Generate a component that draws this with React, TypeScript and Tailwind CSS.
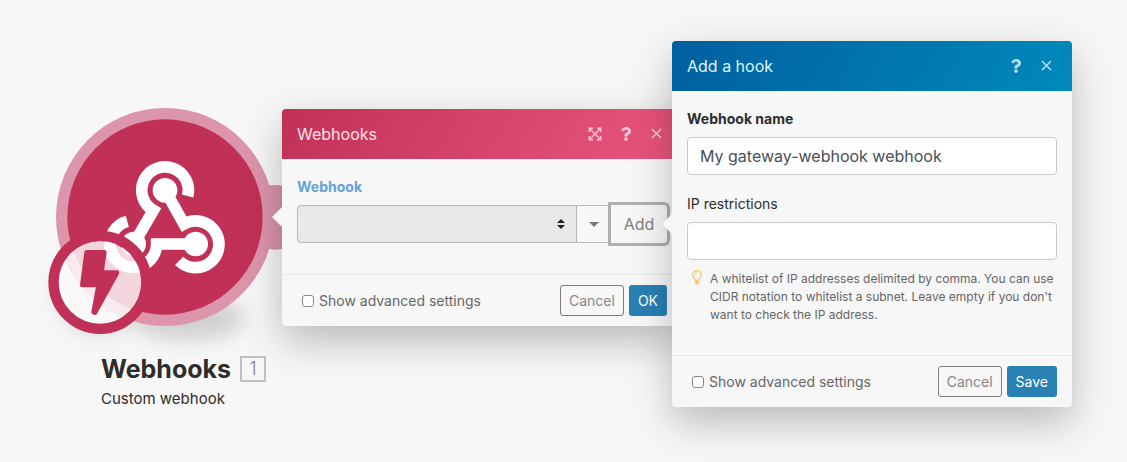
import { useState, type ReactNode } from 'react';
import { FaQuestion } from 'react-icons/fa';

const FONT = "font-['Inter','Liberation_Sans',sans-serif]";

function ExpandIcon() {
  return (
    <svg className="w-[14px] h-[14px]" viewBox="0 0 14 14" fill="none" stroke="currentColor" strokeWidth={1.6} aria-hidden="true">
      <path d="M1.300 5V1.300H5M9 1.300h3.700V5M12.700 9v3.700H9M5 12.700H1.300V9" />
      <path d="M1.500 1.500l11 11M12.500 1.500l-11 11" strokeWidth={1.400} />
    </svg>
  );
}

function CloseIcon() {
  return (
    <svg className="w-[11px] h-[11px]" viewBox="0 0 11 11" fill="none" stroke="currentColor" strokeWidth={1.5} aria-hidden="true">
      <path d="M1 1l9 9M10 1l-9 9" />
    </svg>
  );
}

function BulbIcon() {
  return (
    <svg className="w-[10px] h-[15px] shrink-0" viewBox="0 0 10 15" fill="none" stroke="#fbc15e" aria-hidden="true">
      <path strokeWidth={1.2} d="M3 10.2C3 8.4.7 7.400.7 4.900a4.300 4.300 0 0 1 8.600 0C9.300 7.400 7 8.400 7 10.200z" />
      <path strokeWidth={0.9} d="M5 2.700a2 2 0 0 0-2 2" />
      <path strokeWidth={1.500} d="M2.900 11.700h4.200M3.300 13.500h3.400" />
    </svg>
  );
}

function ModuleIcon() {
  return (
    <svg className="block w-[250px] h-[250px] overflow-visible" viewBox="0 0 750 750" aria-hidden="true">
      <defs>
        <filter id="soft" x="-50%" y="-50%" width="200%" height="200%">
          <feGaussianBlur stdDeviation="32" />
        </filter>
      </defs>
      <ellipse cx="445" cy="670" rx="170" ry="65" fill="#000" opacity="0.16" filter="url(#soft)" />
      <circle cx="180" cy="590" r="130" fill="#000" opacity="0.12" filter="url(#soft)" />
      <circle cx="705" cy="367" r="97" fill="#d893a8" />
      <circle cx="375" cy="366" r="327" fill="#dc95aa" />
      <circle cx="375" cy="366" r="293" fill="#c13157" />

      {/* webhook mark */}
      <g fill="none" stroke="#fff" strokeWidth={35}>
        <path d="M281 447L340 346A70 70 0 1 1 443 303" />
        <path d="M375 285L432 387A70 70 0 1 1 417.500 497.500" />
        <path d="M467 447H350A70 70 0 1 1 262 379" />
      </g>
      <g fill="#fff">
        <circle cx="375" cy="286" r="37" />
        <circle cx="467" cy="447" r="37" />
        <circle cx="281" cy="447" r="37" />
      </g>

      {/* instant trigger badge */}
      <circle cx="180" cy="562" r="124" fill="#fff" opacity="0.8" />
      <circle cx="180" cy="562" r="139.500" fill="none" stroke="#c13157" strokeWidth={31} />
      <path
        d="M140 472H193L184 533H231L165 653L161 651L176 570H127z"
        fill="#c13157" stroke="#c13157" strokeWidth={14} strokeLinejoin="round"
      />
    </svg>
  );
}

interface PanelProps {
  title: string;
  headerClass: string;
  pointerClass: string;
  className: string;
  expandable?: boolean;
  confirmLabel: string;
  checkboxId: string;
  children: ReactNode;
}

function Panel({ title, headerClass, pointerClass, className, expandable, confirmLabel, checkboxId, children }: PanelProps) {
  const [advanced, setAdvanced] = useState(false);

  return (
    <section className={`relative flex-1 min-w-0 rounded bg-[#f7f7f7] shadow-[0_15px_40px_rgba(0,0,0,0.25)] ${className}`}>
      {/* Pointer */}
      <span className={`absolute -left-[10px] w-0 h-0 border-y-[10px] border-y-transparent border-r-[10px] border-r-[#f7f7f7] ${pointerClass}`} />

      {/* Header */}
      <header className={`flex items-center justify-between h-[50px] pl-[15px] pr-[10px] pb-px rounded-t ${headerClass}`}>
        <h2 className="text-base">{title}</h2>
        <div className="flex items-center opacity-80">
          {expandable && (
            <button type="button" aria-label="Expand" className="flex items-center justify-center w-[31px] h-8">
              <ExpandIcon />
            </button>
          )}
          <button type="button" aria-label="Help" className="flex items-center justify-center w-[31px] h-8">
            <FaQuestion size={14} />
          </button>
          <button type="button" aria-label="Close" className="flex items-center justify-center w-[31px] h-8">
            <CloseIcon />
          </button>
        </div>
      </header>

      <div className="px-[15px] pt-[18px] pb-[31px]">{children}</div>

      {/* Footer */}
      <footer className="flex items-center justify-between px-[15px] py-[10px] border-t border-[#e8e8e8] text-sm">
        <label htmlFor={checkboxId} className="flex items-center gap-[5px] pl-[5px] text-[#666]">
          <input
            id={checkboxId}
            type="checkbox"
            checked={advanced}
            onChange={(e) => setAdvanced(e.target.checked)}
            className="w-3 h-3 appearance-none rounded-[3px] border border-[#888] bg-white checked:bg-[#2980b3]"
          />
          Show advanced settings
        </label>
        <div className="flex gap-[5px]">
          <button type="button" className="h-[31px] px-2 rounded-[3px] border border-[#7d7d7d] text-[#868686]">Cancel</button>
          <button type="button" className="h-[31px] px-[9px] rounded-[3px] bg-[#2980b3] text-white">{confirmLabel}</button>
        </div>
      </footer>
    </section>
  );
}

export default function App() {
  const [hook, setHook] = useState('');
  const [name, setName] = useState('My gateway-webhook webhook');
  const [ips, setIps] = useState('');

  return (
    <main className={`flex items-start min-h-screen bg-[#f7f7f7] overflow-hidden pr-[55px] ${FONT}`}>
      {/* Module */}
      <div className="w-[282px] shrink-0 pt-[95px] text-[#2d2d2d]">
        <div className="pl-10">
          <ModuleIcon />
        </div>
        <div className="relative pl-[101px] pt-2">
          <div className="flex items-center gap-[9px]">
            <h1 className="text-[25px] leading-8 font-bold">Webhooks</h1>
            <span className="flex items-center justify-center w-[26px] h-[26px] border-2 border-[#c0c0c0] text-lg font-light text-[#808080]">1</span>
          </div>
          <p className="mt-1 text-[15px] leading-5">Custom webhook</p>
        </div>
      </div>

      <Panel
        title="Webhooks"
        headerClass="bg-linear-120 from-[#c13157] to-[#ea557f] text-[#fde3ea]"
        pointerClass="top-[98px]"
        className="mt-[109px]"
        expandable
        confirmLabel="OK"
        checkboxId="webhook-advanced"
      >
        <label htmlFor="webhook" className="block mb-2 text-sm leading-5 font-bold text-[#62a3dc]">Webhook</label>
        <div className="flex h-[38px]">
          <div className="relative flex-1">
            <select
              id="webhook"
              value={hook}
              onChange={(e) => setHook(e.target.value)}
              className="w-full h-full appearance-none rounded-l border border-[#b9b9b9] bg-[#e9e9e9] px-3"
            >
              <option value=""></option>
            </select>
            <svg className="absolute right-3 top-[14px] w-2 h-[10px] pointer-events-none" viewBox="0 0 8 10" fill="#222" aria-hidden="true">
              <path d="M4 0l4 4H0zM4 10L0 6h8z" />
            </svg>
          </div>
          <button type="button" aria-label="More options" className="flex items-center justify-center w-[34px] border-y border-[#b9b9b9]">
            <svg className="w-[10px] h-[5px]" viewBox="0 0 10 5" fill="#777" aria-hidden="true">
              <path d="M0 0h10L5 5z" />
            </svg>
          </button>
          <button type="button" className="w-14 rounded-r-[3px] text-[#808080] bg-[#f7f7f7] shadow-[0_0_0_3px_#afafaf]">Add</button>
        </div>
      </Panel>

      <Panel
        title="Add a hook"
        headerClass="bg-linear-120 from-[#005f9f] to-[#008abb] text-[#dff6ff]"
        pointerClass="top-[173px]"
        className="mt-[41px] -ml-[10px] z-10"
        confirmLabel="Save"
        checkboxId="hook-advanced"
      >
        <label htmlFor="hook-name" className="block mb-2 text-sm leading-5 font-bold text-[#2d2d2d]">Webhook name</label>
        <input
          id="hook-name"
          type="text"
          value={name}
          onChange={(e) => setName(e.target.value)}
          className="block w-full h-[38px] px-3 rounded border border-[#ccc] bg-white text-base text-[#495057]"
        />
        <label htmlFor="ip-restrictions" className="block mt-[19px] mb-2 text-sm leading-5 text-[#2d2d2d]">IP restrictions</label>
        <input
          id="ip-restrictions"
          type="text"
          value={ips}
          onChange={(e) => setIps(e.target.value)}
          className="block w-full h-[38px] px-3 rounded border border-[#ccc] bg-white text-base text-[#495057]"
        />
        <div className="flex items-start gap-2 mt-[10px] pl-[5px]">
          <BulbIcon />
          <p className="text-xs leading-[18px] text-[#666]">
            A whitelist of IP addresses delimited by comma. You can use CIDR notation to whitelist a subnet. Leave empty if you don't want to check the IP address.
          </p>
        </div>
      </Panel>
    </main>
  );
}
